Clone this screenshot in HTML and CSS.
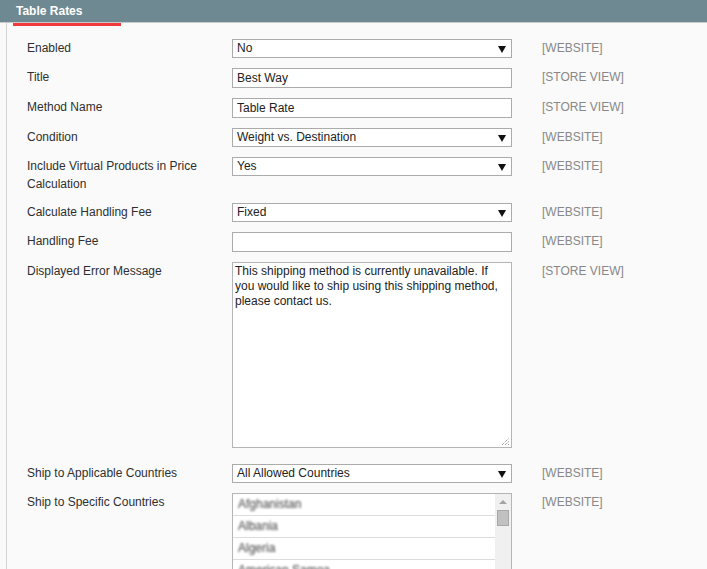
FILE: index.html
```html
<!DOCTYPE html>
<html>
<head>
<meta charset="utf-8">
<link rel="stylesheet" href="styles.css">
</head>
<body>
<div class="panel">
  <div class="head"><span class="head-title">Table Rates</span></div>
  <div class="tab-line"></div>
  <div class="form">
    <div class="row">
      <div class="label">Enabled</div>
      <div class="field"><div class="select">No</div></div>
      <div class="scope">[WEBSITE]</div>
    </div>
    <div class="row">
      <div class="label">Title</div>
      <div class="field"><div class="input">Best Way</div></div>
      <div class="scope">[STORE VIEW]</div>
    </div>
    <div class="row">
      <div class="label">Method Name</div>
      <div class="field"><div class="input">Table Rate</div></div>
      <div class="scope">[STORE VIEW]</div>
    </div>
    <div class="row">
      <div class="label">Condition</div>
      <div class="field"><div class="select">Weight vs. Destination</div></div>
      <div class="scope">[WEBSITE]</div>
    </div>
    <div class="row">
      <div class="label">Include Virtual Products in Price Calculation</div>
      <div class="field"><div class="select">Yes</div></div>
      <div class="scope">[WEBSITE]</div>
    </div>
    <div class="row">
      <div class="label">Calculate Handling Fee</div>
      <div class="field"><div class="select">Fixed</div></div>
      <div class="scope">[WEBSITE]</div>
    </div>
    <div class="row">
      <div class="label">Handling Fee</div>
      <div class="field"><div class="input"></div></div>
      <div class="scope">[WEBSITE]</div>
    </div>
    <div class="row row-tall">
      <div class="label">Displayed Error Message</div>
      <div class="field">
        <div class="textarea">This shipping method is currently unavailable. If you would like to ship using this shipping method, please contact us.
          <svg class="grip" width="9" height="9" viewBox="0 0 9 9"><path d="M1 8L8 1M4 8L8 4M7 8L8 7" stroke="#777" stroke-width="1" stroke-dasharray="1 1" fill="none"/></svg>
        </div>
      </div>
      <div class="scope">[STORE VIEW]</div>
    </div>
    <div class="row">
      <div class="label">Ship to Applicable Countries</div>
      <div class="field"><div class="select">All Allowed Countries</div></div>
      <div class="scope">[WEBSITE]</div>
    </div>
    <div class="row">
      <div class="label">Ship to Specific Countries</div>
      <div class="field">
        <div class="multi">
          <div class="options">
            <div class="opt"><span class="blur">Afghanistan</span></div>
            <div class="opt"><span class="blur">Albania</span></div>
            <div class="opt"><span class="blur">Algeria</span></div>
            <div class="opt"><span class="blur">American Samoa</span></div>
          </div>
          <div class="scrollbar">
            <div class="sb-arrow"></div>
            <div class="sb-thumb"></div>
          </div>
        </div>
      </div>
      <div class="scope">[WEBSITE]</div>
    </div>
  </div>
</div>
</body>
</html>
```

FILE: styles.css
```css
html, body {
  margin: 0;
  padding: 0;
  background: #fafafa;
  font-family: "Liberation Sans", Arial, sans-serif;
  font-size: 12px;
  color: #2f2f2f;
  overflow: hidden;
  height: 569px;
}

.panel {
  margin-left: 6px;
  border-left: 1px solid #d3d3d3;
  min-height: 569px;
  background: #fafafa;
}

.head {
  height: 22px;
  background: #6f8992;
  border-bottom: 1px solid #c9c9c9;
  margin-left: -7px;
  padding-left: 16px;
  display: flex;
  align-items: center;
}

.head-title {
  color: #fff;
  font-weight: bold;
  font-size: 12px;
}

.tab-line {
  margin-left: 6px;
  width: 108px;
  height: 3px;
  background: #f33a3a;
}

.form {
  padding: 13px 0 0 20px;
  display: flex;
  flex-direction: column;
  gap: 10px;
}

.row {
  display: grid;
  grid-template-columns: 205px 280px 30px auto;
  align-items: start;
}

.label {
  grid-column: 1;
  line-height: 18px;
  padding-right: 25px;
  color: #2f2f2f;
}

.field {
  grid-column: 2;
}

.scope {
  grid-column: 4;
  color: #888;
  line-height: 18px;
}

.input, .select {
  box-sizing: border-box;
  height: 19px;
  border: 1px solid #ababab;
  background: #fff;
  line-height: 17px;
  padding: 0 4px;
  color: #222;
  position: relative;
}

.input {
  height: 20px;
  line-height: 18px;
}

.select::after {
  content: "";
  position: absolute;
  right: 5px;
  top: 6px;
  border-left: 4px solid transparent;
  border-right: 4px solid transparent;
  border-top: 7px solid #111;
}

.row-tall .textarea {
  box-sizing: border-box;
  height: 186px;
  border: 1px solid #b5b5b5;
  background: #fff;
  padding: 1px 2px;
  line-height: 15px;
  color: #222;
  position: relative;
  margin-bottom: 6px;
}

.grip {
  position: absolute;
  right: 1px;
  bottom: 1px;
}

.multi {
  box-sizing: border-box;
  height: 90px;
  border: 1px solid #b5b5b5;
  background: #fff;
  display: flex;
}

.options {
  flex: 1;
}

.opt {
  height: 21px;
  border-bottom: 1px solid #dcdcdc;
  padding-left: 5px;
  line-height: 21px;
}

.blur {
  color: #666;
  filter: blur(1px);
  text-shadow: 0 0 1px #999;
}

.scrollbar {
  width: 16px;
  background: #f0f0f0;
  display: flex;
  flex-direction: column;
  align-items: center;
}

.sb-arrow {
  margin-top: 6px;
  border-left: 4px solid transparent;
  border-right: 4px solid transparent;
  border-bottom: 4px solid #a3a3a3;
}

.sb-thumb {
  margin-top: 6px;
  width: 12px;
  height: 16px;
  background: #c1c1c1;
  border: 1px solid #a8a8a8;
  box-sizing: border-box;
}
```
